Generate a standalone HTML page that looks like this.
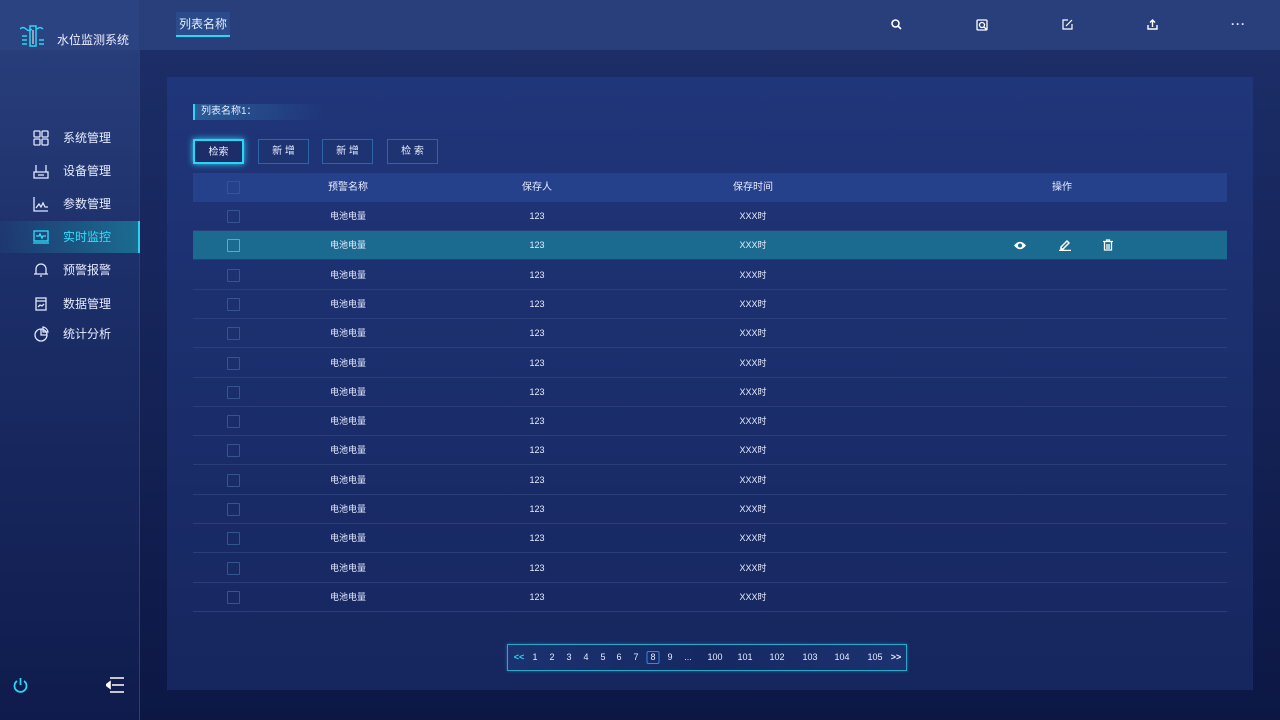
<!DOCTYPE html>
<html><head><meta charset="utf-8"><style>
*{margin:0;padding:0;box-sizing:border-box}
body{width:1280px;height:720px;overflow:hidden;background:linear-gradient(#1d2f6a,#0c1744);font-family:"Liberation Sans","Noto Sans CJK SC",sans-serif;color:#e6ecff;position:relative}
.side{position:absolute;left:0;top:0;width:140px;height:720px;background:linear-gradient(#2a417f,#1c2e68 40%,#0f1b4c);border-right:1px solid #2a3d7c}
.sidetop{position:absolute;left:0;top:0;width:139px;height:50px;background:#2b4381}
.logo{position:absolute;left:20px;top:24px}
.ttl{position:absolute;left:57px;top:31px;font-size:12px;color:#eef}
.nav{position:absolute;left:0;width:140px;height:32px;font-size:12px;line-height:32px}
.nav span{position:absolute;left:63px}
.nav svg{position:absolute;left:33px;top:8px}
.nav.on{background:linear-gradient(90deg,rgba(30,110,150,0.1),#1b6c90);border-right:2px solid #29d2f0;color:#2ee0ff}
.hdr{position:absolute;left:140px;top:0;width:1140px;height:50px;background:#283f7c}
.tab{position:absolute;left:176px;top:12px;width:54px;height:25px;font-size:12px;line-height:25px;text-align:center;background:linear-gradient(#2a4a8a,#2b4d8c);border-bottom:2px solid #2ad6f5}
.ic{position:absolute;top:19px}
.panel{position:absolute;left:167px;top:77px;width:1086px;height:613px;background:linear-gradient(#20367a,#16265e)}
.lbl{position:absolute;left:193px;top:104px;width:130px;height:16px;border-left:2px solid #2ad6f5;background:linear-gradient(90deg,#2a5c98,rgba(40,80,140,0));font-size:10px;line-height:16px;padding-left:6px}
.btn{position:absolute;top:139px;width:51px;height:25px;border:1px solid #2d66a6;font-size:10px;text-align:center;line-height:23px;background:#1e3372}
.btn.a{border:2px solid #2ad6f5;box-shadow:0 0 6px #2ad6f5;background:#1d2d68}
.row{position:absolute;left:193px;width:1034px;height:29px;border-bottom:1px solid #2a3e7c;font-size:9px}
.row div{position:absolute;top:0;line-height:29px;text-align:center;width:120px}
.cb{position:absolute;left:34px;top:8px;width:13px;height:13px;border:1px solid #34558f;border-radius:1px}
.pg{position:absolute;left:507px;top:644px;width:400px;height:27px;border:1px solid #2aa8c8;background:linear-gradient(90deg,#1c3270,#152862 50%,#1c3270);box-shadow:0 0 3px #1b6fa0;font-size:9px;line-height:25px}
.pg span{position:absolute;top:0;transform:translateX(-50%)}
</style></head><body>
<div class="side">
<div class="sidetop"></div>
<svg class="logo" width="26" height="24" viewBox="0 0 26 24" fill="none" stroke="#2ad6f5" stroke-width="1.5"><path d="M0 5q3-3 6 0t6 0"/><path d="M17 5q3-3 6 0"/><rect x="10" y="2" width="6" height="20"/><path d="M2 12h5M2 16h5M2 20h5M19 16h5M19 20h5"/><path d="M13 6v14" stroke="#fff" stroke-width="1"/></svg>
<div class="ttl">水位监测系统</div>
<div class="nav" style="top:122px"><svg width="16" height="16" fill="none" stroke="#dfe6ff" stroke-width="1.3"><rect x="1" y="1" width="6" height="6" rx="1"/><rect x="9" y="1" width="6" height="6" rx="1"/><rect x="1" y="9" width="6" height="6" rx="1"/><rect x="9" y="9" width="6" height="6" rx="1"/></svg><span>系统管理</span></div>
<div class="nav" style="top:155px"><svg width="16" height="16" fill="none" stroke="#dfe6ff" stroke-width="1.3"><path d="M3 2v7M13 2v7"/><rect x="1" y="9" width="14" height="6"/><path d="M5 12h6"/></svg><span>设备管理</span></div>
<div class="nav" style="top:188px"><svg width="16" height="16" fill="none" stroke="#dfe6ff" stroke-width="1.3"><path d="M1 1v14h14"/><path d="M3 12l3-4 2 3 2-4 2 4h3"/></svg><span>参数管理</span></div>
<div class="nav on" style="top:221px"><svg width="16" height="16" fill="none" stroke="#2ee0ff" stroke-width="1.3"><rect x="1" y="2" width="14" height="10"/><path d="M0 14h16M3 7h3l1-2 2 4 1-2h3"/></svg><span>实时监控</span></div>
<div class="nav" style="top:254px"><svg width="16" height="16" fill="none" stroke="#dfe6ff" stroke-width="1.3"><path d="M3 12V7a5 5 0 0110 0v5zM1 12h14M7 14h2"/></svg><span>预警报警</span></div>
<div class="nav" style="top:288px"><svg width="16" height="16" fill="none" stroke="#dfe6ff" stroke-width="1.3"><rect x="3" y="2" width="10" height="12"/><path d="M3 5h10M5 11l2-2 2 1 2-2"/></svg><span>数据管理</span></div>
<div class="nav" style="top:318px"><svg width="16" height="16" fill="none" stroke="#dfe6ff" stroke-width="1.3"><circle cx="8" cy="9" r="6"/><path d="M8 3v6h6"/><path d="M10 1a6 6 0 015 5h-5z"/></svg><span>统计分析</span></div>
<svg style="position:absolute;left:12px;top:677px" width="17" height="17" fill="none" stroke="#2ad6f5" stroke-width="1.8"><path d="M5 4a6 6 0 107 0"/><path d="M8.5 1v7"/></svg>
<svg style="position:absolute;left:106px;top:677px" width="22" height="16" fill="none" stroke="#fff" stroke-width="1.6"><path d="M4 1h14M6 8h12M4 15h14"/><path d="M0 8l4-3v6z" fill="#fff"/></svg>
</div>
<div class="hdr"></div>
<div class="tab">列表名称</div>
<svg class="ic" style="left:891px" width="11" height="11" fill="none" stroke="#fff" stroke-width="1.6"><circle cx="4.5" cy="4.5" r="3.5"/><path d="M7 7l3 3"/></svg>
<svg class="ic" style="left:976px" width="12" height="12" fill="none" stroke="#fff" stroke-width="1.3"><rect x="1" y="1" width="10" height="10" rx="1"/><circle cx="6" cy="6" r="2.5"/><path d="M8 8l2.5 2.5"/></svg>
<svg class="ic" style="left:1062px" width="11" height="11" fill="none" stroke="#fff" stroke-width="1.2"><path d="M6 1H1v9h9V5"/><path d="M4 7l6-6"/></svg>
<svg class="ic" style="left:1147px" width="11" height="11" fill="none" stroke="#fff" stroke-width="1.4"><path d="M5.5 8V1M3 3.5L5.5 1 8 3.5M1 6v4h9V6"/></svg>
<div class="ic" style="left:1231px;top:17px;font-size:12px;letter-spacing:1px;font-weight:bold">···</div>
<div class="panel"></div>
<div class="lbl">列表名称1：</div>
<div class="btn a" style="left:193px">检索</div>
<div class="btn" style="left:258px">新 增</div>
<div class="btn" style="left:322px">新 增</div>
<div class="btn" style="left:387px">检 索</div>
<div class="row" style="top:173px;background:#26418c;border:none;font-size:10px"><span class="cb"></span><div style="left:95px">预警名称</div><div style="left:284px">保存人</div><div style="left:500px">保存时间</div><div style="left:809px">操作</div></div>
<div id="rows"></div>
<div class="pg">
<span style="left:11px;color:#2ad6f5;font-weight:bold">&lt;&lt;</span><span style="left:27px">1</span><span style="left:44px">2</span><span style="left:61px">3</span><span style="left:78px">4</span><span style="left:95px">5</span><span style="left:111px">6</span><span style="left:128px">7</span>
<span style="left:145px;top:6px;width:13px;height:13px;border:1px solid #2f8ae0;border-radius:2px;line-height:11px;text-align:center">8</span>
<span style="left:162px">9</span><span style="left:180px">...</span><span style="left:207px">100</span><span style="left:237px">101</span><span style="left:269px">102</span><span style="left:302px">103</span><span style="left:334px">104</span><span style="left:367px">105</span><span style="left:388px;font-weight:bold">&gt;&gt;</span>
</div>
<script>
var h='';for(var i=0;i<14;i++){var t=202+i*29.3;h+='<div class="row" style="top:'+t+'px;'+(i==1?'background:#1b6a90;':'')+'"><span class="cb" style="'+(i==1?'border-color:#6aa3c4':'')+'"></span><div style="left:95px">电池电量</div><div style="left:284px">123</div><div style="left:500px">XXX时</div>'+(i==1?'<svg style="position:absolute;left:821px;top:10px" width="12" height="9" fill="#fff"><path d="M0 4.5Q6-3 12 4.5 6 12 0 4.5z"/><circle cx="6" cy="4.5" r="2" fill="#1b6a90"/></svg><svg style="position:absolute;left:866px;top:8px" width="12" height="12" fill="none" stroke="#fff" stroke-width="1.5"><path d="M2 8l6-6 2 2-6 6H2zM0 11.5h12"/></svg><svg style="position:absolute;left:910px;top:8px" width="10" height="12" fill="none" stroke="#fff" stroke-width="1.3"><path d="M0 2.5h10M3.5 2.5V1h3v1.5M1.5 3v8h7V3M4 5v5M6 5v5"/></svg>':'')+'</div>';}
document.getElementById('rows').innerHTML=h;
</script>
</body></html>
